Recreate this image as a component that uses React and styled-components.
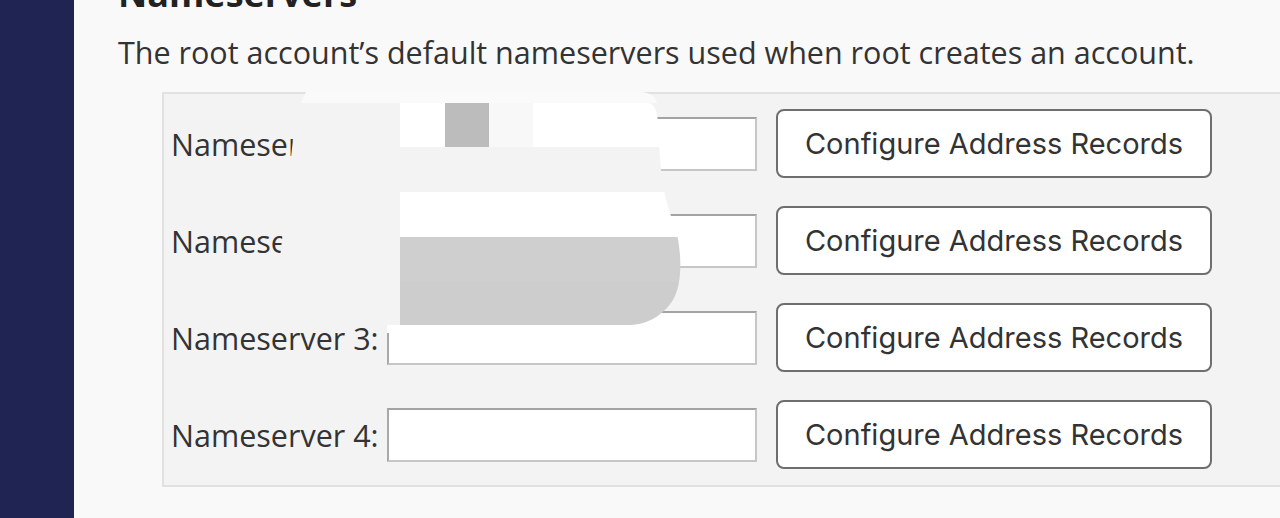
import React from "react";
import styled, { createGlobalStyle } from "styled-components";

const GlobalStyle = createGlobalStyle`
  html, body {
    margin: 0;
    padding: 0;
    overflow: hidden;
    background: #f9f9f9;
  }
  body {
    font-family: "Open Sans", "Noto Sans", sans-serif;
    color: #333;
  }
`;

const Page = styled.div`
  position: relative;
  display: flex;
  width: 1280px;
  height: 518px;
  overflow: hidden;
  background: #f9f9f9;
`;

const Sidebar = styled.nav`
  flex: 0 0 74px;
  height: 100%;
  background: #1f2453;
`;

const Main = styled.main`
  flex: 1 1 auto;
  min-width: 0;
  padding-left: 44px;
  overflow: hidden;
`;

const Heading = styled.h2`
  margin: -26px 0 0;
  font-family: "Open Sans", sans-serif;
  font-size: 36px;
  line-height: 40px;
  font-weight: 700;
  color: #222;
`;

const Description = styled.p`
  margin: 17px 0 0;
  font-size: 30.5px;
  line-height: 42px;
  color: #333;
  white-space: nowrap;
`;

const Panel = styled.fieldset`
  margin: 19px 0 0 44px;
  padding: 1px 0 2px 7px;
  width: 1140px;
  border: 2px solid #e1e1e1;
  background: #f3f3f3;
  box-sizing: border-box;
  min-width: 0;
`;

const Row = styled.div`
  display: grid;
  grid-template-columns: 216px 389px 436px;
  height: 97px;
  align-items: center;
`;

const Label = styled.label`
  font-size: 30.5px;
  color: #333;
  white-space: nowrap;
`;

const TextInput = styled.input`
  box-sizing: border-box;
  width: 370px;
  height: 54px;
  margin: 0;
  padding: 0 8px;
  background: #fff;
  border: 2px solid #c6c6c6;
  border-top-color: #a3a3a3;
  border-left-color: #a8a8a8;
  font: inherit;
  font-size: 24px;
`;

const ActionButton = styled.button`
  box-sizing: border-box;
  width: 436px;
  height: 69px;
  margin: 0;
  padding: 0;
  background: #fff;
  border: 2px solid #6e6e6e;
  border-radius: 8px;
  font-family: "Inter", "Roboto", sans-serif;
  font-size: 29px;
  color: #333;
  cursor: pointer;
`;

const MaskLayer = styled.svg`
  position: absolute;
  left: 0;
  top: 0;
  width: 1280px;
  height: 518px;
  pointer-events: none;
`;

const blobOutline =
  "M400 103 H648 C655 103 658 114 658 125 C659 142 660 162 662 180 C665 200 671 216 677 234 C682 258 682 284 673 300 C663 315 648 325 628 325 H400 Z";

function Mask() {
  return (
    <MaskLayer viewBox="0 0 1280 518" aria-hidden="true">
      <defs>
        <clipPath id="blob">
          <path d={blobOutline} />
        </clipPath>
      </defs>
      <path d="M306 92 H640 C650 92 656 97 657 103 H301 Z" fill="#fafafa" />
      <path d="M297 103 H400 V326 H272.5 Z" fill="#f3f3f3" />
      <g clipPath="url(#blob)">
        <rect x="400" y="103" width="45" height="44" fill="#ffffff" />
        <rect x="445" y="103" width="44" height="44" fill="#bcbcbc" />
        <rect x="489" y="103" width="44" height="44" fill="#f8f8f8" />
        <rect x="533" y="103" width="160" height="44" fill="#ffffff" />
        <rect x="400" y="147" width="300" height="45" fill="#f3f3f3" />
        <rect x="400" y="192" width="300" height="45" fill="#ffffff" />
        <rect x="400" y="237" width="300" height="45" fill="#cfcfcf" />
        <rect x="400" y="282" width="300" height="44" fill="#cdcdcd" />
      </g>
      <rect x="387" y="325" width="13" height="8" fill="#ffffff" />
    </MaskLayer>
  );
}

const servers = [1, 2, 3, 4];

export default function App() {
  return (
    <>
      <GlobalStyle />
      <Page>
        <Sidebar />
        <Main>
          <Heading>Nameservers</Heading>
          <Description>
            The root account’s default nameservers used when root creates an account.
          </Description>
          <Panel>
            {servers.map((n) => (
              <Row key={n}>
                <Label htmlFor={`ns${n}`}>Nameserver {n}:</Label>
                <TextInput id={`ns${n}`} type="text" />
                <ActionButton type="button">Configure Address Records</ActionButton>
              </Row>
            ))}
          </Panel>
        </Main>
        <Mask />
      </Page>
    </>
  );
}
